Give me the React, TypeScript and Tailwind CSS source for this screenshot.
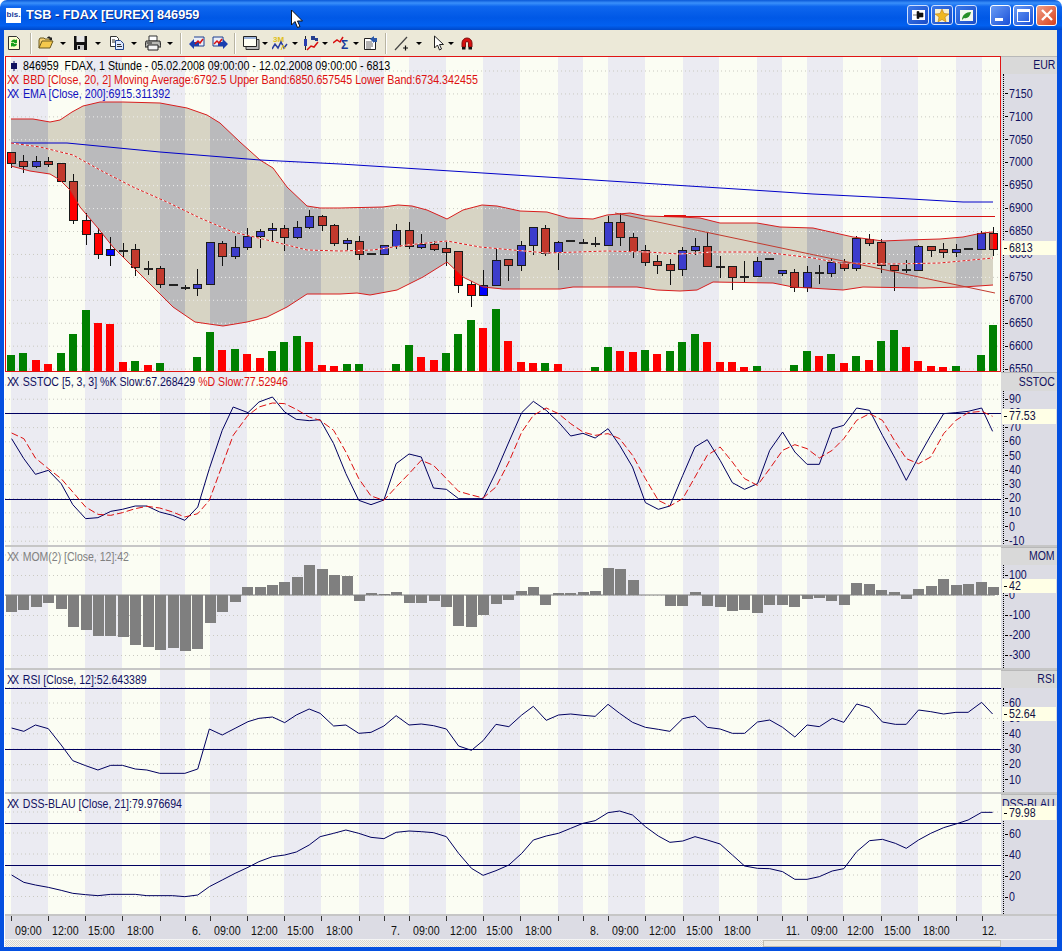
import type { ReactNode } from "react";

// stripe edges in page x, the stripes alternate cream / lavender
const edges = [5, 11, 48, 85, 122, 160, 185, 210, 247, 284, 321, 359, 384, 409, 446, 483, 520, 558, 583, 608, 645, 683, 719, 757, 782, 807, 843, 881, 918, 956, 982, 1001];
const stripes = edges.slice(0, -1).map((x, i) => ({ x, w: edges[i + 1] - x, lav: i % 2 === 1 }));
const barX = (i: number) => 11 + 12.43 * i;

type Candle = [number, number, number, number, "r" | "b" | "d"];
const candles: Candle[] = [
  [152, 152, 163, 168, "r"], [155, 161, 166, 173, "r"], [156, 161, 166, 168, "b"], [157, 161, 164, 167, "r"],
  [163, 163, 181, 181, "r"], [174, 181, 220, 224, "r"], [213, 220, 234, 245, "r"], [228, 233, 254, 259, "r"],
  [237, 249, 255, 266, "b"], [243, 250, 250, 258, "d"], [244, 249, 267, 276, "r"], [261, 268, 268, 275, "d"],
  [266, 268, 284, 288, "r"], [284, 284, 284, 284, "d"], [285, 287, 287, 290, "d"], [269, 284, 288, 296, "b"],
  [242, 242, 284, 285, "b"], [241, 243, 256, 266, "r"], [236, 247, 256, 259, "b"], [228, 236, 247, 250, "b"],
  [229, 231, 236, 248, "b"], [223, 228, 230, 241, "b"], [225, 228, 237, 251, "r"], [221, 227, 237, 239, "b"],
  [210, 216, 227, 229, "b"], [215, 216, 225, 231, "r"], [224, 225, 243, 246, "r"], [238, 240, 243, 250, "b"],
  [236, 241, 254, 260, "r"], [253, 253, 253, 253, "d"], [245, 245, 254, 254, "b"], [224, 230, 246, 249, "b"],
  [222, 230, 246, 249, "r"], [234, 244, 247, 249, "b"], [241, 244, 249, 251, "r"], [242, 248, 252, 266, "r"],
  [251, 251, 285, 293, "r"], [281, 284, 295, 307, "r"], [270, 285, 295, 295, "b"], [249, 260, 285, 285, "b"],
  [259, 259, 265, 281, "r"], [241, 245, 265, 271, "b"], [227, 227, 245, 255, "b"], [225, 228, 253, 256, "r"],
  [241, 242, 252, 270, "b"], [240, 240, 240, 240, "d"], [239, 242, 242, 244, "d"], [237, 243, 243, 247, "d"],
  [216, 222, 245, 245, "b"], [213, 222, 237, 246, "r"], [233, 237, 251, 258, "r"], [245, 250, 262, 266, "r"],
  [255, 261, 265, 274, "r"], [259, 264, 270, 285, "r"], [247, 250, 269, 276, "b"], [238, 246, 250, 255, "b"],
  [232, 246, 266, 266, "r"], [256, 266, 266, 278, "d"], [266, 266, 277, 290, "r"], [261, 276, 276, 282, "d"],
  [257, 261, 276, 277, "b"], [258, 258, 258, 258, "d"], [270, 270, 273, 276, "b"], [269, 272, 287, 292, "r"],
  [266, 272, 287, 292, "b"], [265, 272, 272, 284, "d"], [258, 262, 273, 277, "b"], [259, 262, 268, 271, "r"],
  [236, 238, 268, 271, "b"], [234, 239, 243, 246, "r"], [239, 242, 265, 273, "r"], [265, 265, 270, 291, "r"],
  [260, 269, 269, 273, "d"], [245, 246, 270, 271, "b"], [246, 246, 250, 257, "r"], [243, 249, 252, 258, "r"],
  [244, 249, 252, 257, "b"], [248, 248, 248, 248, "d"], [231, 233, 249, 250, "b"], [227, 233, 249, 256, "r"],
];

// volume bar tops, 0 = no bar. Colour per bar: g or r
const volumes: [number, "g" | "r"][] = [
  [355, "g"], [353, "g"], [360, "r"], [364, "r"], [353, "g"], [334, "g"], [310, "g"], [323, "r"], [324, "r"], [362, "r"],
  [361, "g"], [365, "r"], [363, "g"], [0, "g"], [0, "g"], [357, "g"], [332, "g"], [350, "r"], [349, "g"], [354, "r"],
  [358, "r"], [351, "g"], [342, "g"], [336, "g"], [342, "r"], [365, "r"], [366, "r"], [364, "g"], [364, "g"], [0, "g"],
  [0, "g"], [364, "g"], [345, "g"], [357, "r"], [360, "r"], [353, "g"], [334, "g"], [320, "g"], [328, "r"], [309, "g"],
  [341, "r"], [362, "r"], [363, "r"], [363, "g"], [364, "r"], [0, "g"], [0, "g"], [367, "g"], [347, "g"], [351, "r"],
  [352, "r"], [350, "g"], [354, "r"], [351, "g"], [342, "g"], [334, "g"], [342, "r"], [362, "r"], [362, "r"], [367, "r"],
  [366, "g"], [0, "g"], [0, "g"], [365, "g"], [351, "g"], [356, "r"], [354, "g"], [363, "r"], [356, "g"], [360, "r"],
  [341, "g"], [330, "g"], [347, "r"], [361, "r"], [366, "r"], [367, "r"], [366, "g"], [0, "g"], [355, "g"], [325, "g"],
];

// momentum bar ends, the baseline sits at y=595
const mom = [
  612, 610, 607, 603, 609, 627, 630, 636, 636, 637, 645, 647, 650, 648, 651, 649, 623, 612, 602, 587,
  587, 585, 582, 577, 565, 569, 575, 576, 601, 593, 594, 592, 603, 603, 601, 607, 626, 627, 615, 604,
  600, 591, 587, 605, 593, 593, 592, 591, 568, 569, 580, 595, 595, 606, 606, 592, 606, 607, 611, 610,
  613, 605, 605, 607, 599, 598, 601, 605, 583, 584, 590, 592, 599, 589, 586, 579, 585, 584, 582, 587,
];

const upper: number[][] = [[11, 119], [33, 119], [50, 122], [60, 120], [72, 112], [83, 106], [100, 102], [123, 102], [160, 103], [187, 108], [207, 115], [220, 123], [240, 142], [260, 160], [273, 168], [287, 187], [307, 206], [320, 208], [340, 208], [383, 207], [398, 205], [412, 206], [427, 210], [447, 219], [463, 210], [482, 205], [497, 206], [520, 211], [547, 212], [568, 218], [593, 219], [607, 215], [630, 213], [645, 216], [680, 217], [700, 218], [720, 223], [757, 223], [780, 227], [813, 228], [853, 237], [883, 241], [907, 240], [940, 239], [963, 237], [982, 233], [993, 232]];
const lower: number[][] = [[11, 166], [30, 171], [50, 174], [60, 180], [70, 190], [80, 207], [97, 227], [113, 247], [133, 267], [153, 287], [173, 307], [195, 322], [223, 326], [247, 322], [267, 317], [287, 307], [307, 294], [340, 294], [357, 293], [370, 295], [397, 290], [423, 277], [447, 262], [463, 277], [483, 287], [503, 289], [560, 289], [573, 287], [637, 287], [657, 290], [680, 291], [697, 290], [713, 282], [773, 283], [793, 287], [843, 290], [863, 287], [923, 288], [963, 287], [993, 285]];
const middle: number[][] = [[11, 143], [40, 147], [73, 155], [100, 170], [133, 187], [167, 202], [200, 218], [233, 232], [267, 240], [307, 250], [340, 251], [373, 250], [407, 245], [447, 241], [480, 247], [513, 250], [547, 253], [607, 251], [647, 252], [680, 254], [713, 252], [763, 252], [813, 258], [840, 263], [893, 264], [940, 263], [993, 258]];
const ema: number[][] = [[11, 143], [67, 143], [160, 152], [260, 160], [340, 164], [752, 190], [813, 194], [893, 198], [963, 202], [993, 202]];

// indicator lines were read off zoomed crops, so x comes in crop units
const fromCrop = (pts: number[][], top: number) => pts.map(([x, y]) => [x / 1.5525, top + y / 3]);
const pointsOf = (pts: number[][]) => pts.map((p) => p.join(",")).join(" ");

const stochK = fromCrop([[18, 200], [37, 260], [55, 307], [75, 295], [95, 335], [113, 398], [133, 440], [152, 437], [172, 418], [190, 412], [210, 402], [228, 402], [248, 420], [268, 430], [287, 445], [307, 405], [325, 290], [345, 175], [362, 105], [385, 122], [402, 90], [423, 75], [442, 120], [460, 142], [480, 146], [497, 143], [518, 215], [537, 305], [557, 385], [576, 398], [596, 384], [615, 275], [635, 246], [654, 255], [673, 348], [693, 352], [712, 380], [750, 380], [770, 300], [790, 210], [810, 122], [828, 88], [848, 115], [867, 150], [886, 192], [905, 184], [924, 198], [944, 170], [962, 220], [982, 285], [1002, 392], [1022, 412], [1040, 402], [1060, 310], [1079, 225], [1098, 203], [1118, 265], [1137, 332], [1156, 352], [1176, 335], [1195, 235], [1215, 180], [1234, 240], [1253, 277], [1272, 277], [1292, 170], [1310, 160], [1330, 108], [1350, 115], [1370, 190], [1390, 260], [1407, 325], [1426, 255], [1445, 190], [1465, 125], [1484, 122], [1503, 118], [1524, 108], [1541, 178]], 372);
const stochD = fromCrop([[18, 183], [37, 200], [55, 258], [75, 290], [95, 320], [113, 360], [133, 405], [152, 427], [172, 430], [190, 422], [210, 410], [228, 403], [248, 408], [268, 420], [287, 435], [307, 425], [325, 385], [345, 280], [362, 190], [385, 130], [402, 105], [423, 93], [442, 95], [460, 112], [480, 135], [497, 145], [518, 175], [537, 240], [557, 320], [576, 372], [596, 385], [615, 345], [635, 305], [654, 265], [673, 280], [693, 320], [712, 358], [730, 368], [750, 378], [770, 345], [790, 270], [810, 180], [828, 130], [848, 108], [867, 125], [886, 155], [905, 180], [924, 190], [944, 185], [962, 200], [982, 250], [1002, 320], [1022, 385], [1040, 402], [1060, 380], [1079, 315], [1098, 250], [1118, 225], [1137, 270], [1156, 320], [1176, 340], [1195, 290], [1215, 235], [1234, 218], [1253, 230], [1272, 258], [1292, 235], [1310, 200], [1330, 145], [1350, 125], [1370, 145], [1390, 210], [1407, 260], [1426, 275], [1445, 255], [1465, 185], [1484, 145], [1503, 122], [1524, 118], [1541, 133]], 372);
const rsi = fromCrop([[18, 174], [37, 184], [55, 165], [75, 176], [95, 225], [113, 272], [133, 287], [152, 300], [172, 286], [190, 286], [210, 297], [228, 300], [248, 310], [287, 310], [307, 297], [325, 177], [345, 195], [365, 175], [385, 155], [402, 145], [423, 141], [442, 158], [460, 135], [480, 117], [497, 130], [518, 168], [537, 165], [557, 190], [576, 187], [596, 168], [615, 137], [635, 165], [654, 162], [673, 167], [693, 177], [712, 228], [732, 241], [750, 212], [770, 163], [790, 170], [810, 135], [828, 109], [848, 151], [867, 135], [886, 132], [905, 136], [924, 139], [944, 103], [962, 130], [982, 157], [1002, 172], [1022, 178], [1040, 184], [1060, 146], [1079, 138], [1098, 172], [1118, 177], [1137, 190], [1156, 190], [1176, 156], [1195, 150], [1215, 172], [1234, 201], [1253, 165], [1272, 170], [1292, 145], [1310, 157], [1330, 102], [1350, 113], [1370, 156], [1390, 163], [1407, 163], [1426, 120], [1445, 125], [1465, 132], [1484, 127], [1503, 127], [1524, 97], [1541, 132]], 670);
const dss = fromCrop([[18, 615], [37, 637], [55, 645], [75, 652], [95, 661], [113, 670], [133, 674], [152, 677], [172, 673], [210, 673], [228, 677], [268, 677], [287, 680], [307, 675], [325, 650], [345, 630], [365, 610], [385, 592], [402, 575], [423, 560], [442, 555], [460, 546], [480, 525], [497, 500], [518, 490], [537, 480], [557, 490], [576, 502], [596, 506], [615, 487], [635, 483], [654, 485], [673, 488], [693, 500], [712, 550], [732, 595], [750, 616], [770, 602], [790, 585], [810, 550], [828, 510], [848, 498], [867, 490], [886, 475], [905, 460], [924, 452], [944, 428], [962, 423], [982, 435], [1002, 470], [1022, 498], [1040, 517], [1060, 513], [1079, 500], [1098, 510], [1118, 522], [1137, 555], [1156, 588], [1176, 595], [1195, 596], [1215, 605], [1234, 628], [1253, 628], [1272, 620], [1292, 603], [1310, 596], [1330, 545], [1350, 512], [1370, 508], [1390, 520], [1407, 535], [1426, 510], [1445, 490], [1465, 473], [1484, 462], [1503, 450], [1524, 427], [1541, 427]], 670);

const timeSegments: { x: number; w: number; label?: string; pad: string }[] = [
  ["09:00", 4], ["12:00", 4], ["15:00", 3], ["18:00", 5], ["", 0], ["6.", 7], ["09:00", 4], ["12:00", 4], ["15:00", 3], ["18:00", 5], ["", 0],
  ["7.", 7], ["09:00", 4], ["12:00", 4], ["15:00", 3], ["18:00", 5], ["", 0], ["8.", 7], ["09:00", 4], ["12:00", 4], ["15:00", 3], ["18:00", 5], ["", 0],
  ["11.", 4], ["09:00", 4], ["12:00", 4], ["15:00", 3], ["18:00", 5], ["", 0], ["12.", 0],
].map((s, i) => ({
  x: edges[i + 1],
  w: edges[i + 2] - edges[i + 1],
  label: s[0] as string,
  pad: `${s[1]}px`,
}));

function Grid({ ys }: { ys: number[] }) {
  return (
    <>
      {ys.map((y) => (
        <line key={y} x1={5} x2={1001} y1={y} y2={y} stroke="#c9c9c0" strokeDasharray="1 3" />
      ))}
    </>
  );
}

function Level({ y }: { y: number }) {
  return <line x1={5} x2={1001} y1={y} y2={y} stroke="#000060" strokeWidth={1} shapeRendering="crispEdges" />;
}

function CandleSet({ red, blue }: { red: string; blue: string }) {
  return (
    <g shapeRendering="crispEdges">
      {candles.map(([wt, bt, bb, wb, kind], i) => {
        const x = Math.round(barX(i));
        return (
          <g key={i}>
            <line x1={x + 0.5} x2={x + 0.5} y1={wt} y2={wb} stroke="#111" />
            {kind === "d" ? (
              <rect x={x - 4} y={bt} width={9} height={1.5} fill="#222" />
            ) : (
              <rect x={x - 4 + 0.5} y={bt + 0.5} width={8} height={Math.max(bb - bt, 2)} fill={kind === "r" ? red : blue} stroke="#1a1a1a" />
            )}
          </g>
        );
      })}
    </g>
  );
}

function PriceChart() {
  const grid = Array.from({ length: 14 }, (_, n) => 71 + 22.93 * n);
  const bandShape = pointsOf([...upper, ...[...lower].reverse()]);
  return (
    <svg className="absolute inset-0" width={996} height={316} viewBox="5 56 996 316">
      <defs>
        <clipPath id="band">
          <polygon points={bandShape} />
        </clipPath>
      </defs>
      <Grid ys={grid} />
      <g clipPath="url(#band)">
        {stripes.map((s) => (
          <rect key={s.x} x={s.x} y={56} width={s.w} height={316} fill={s.lav ? "#bababc" : "#d7d4c4"} />
        ))}
        {grid.map((y) => (
          <line key={y} x1={5} x2={1001} y1={y} y2={y} stroke="#eeeeee" strokeDasharray="1 3" />
        ))}
      </g>
      {volumes.map(([top, colour], i) =>
        top ? (
          <rect key={i} x={Math.round(barX(i)) - 4} y={top} width={8} height={372 - top} fill={colour === "g" ? "#008000" : "#ff0000"} shapeRendering="crispEdges" />
        ) : null
      )}
      <CandleSet red="#ff0000" blue="#0000ff" />
      <g clipPath="url(#band)">
        <CandleSet red="#c23a2e" blue="#3c3ccc" />
      </g>
      <polyline points={pointsOf(upper)} fill="none" stroke="#d81e1e" />
      <polyline points={pointsOf(lower)} fill="none" stroke="#d81e1e" />
      <polyline points={pointsOf(ema)} fill="none" stroke="#0000c8" />
      <polyline points={pointsOf(middle)} fill="none" stroke="#ffffff" />
      <polyline points={pointsOf(middle)} fill="none" stroke="#dd1818" strokeDasharray="3 2" />
      <line x1={664} x2={995} y1={216.5} y2={216.5} stroke="#d81010" />
      <line x1={664} x2={686} y1={216} y2={216} stroke="#e01010" strokeWidth={2} />
      <line x1={615} y1={213} x2={995} y2={293} stroke="#c23a2e" />
    </svg>
  );
}

function StochChart() {
  return (
    <svg className="absolute inset-0" width={996} height={173} viewBox="5 372 996 173">
      <Grid ys={Array.from({ length: 12 }, (_, n) => 385 + 14.2 * n)} />
      <Level y={413.5} />
      <Level y={499.5} />
      <polyline points={pointsOf(stochK)} fill="none" stroke="#000060" />
      <polyline points={pointsOf(stochD)} fill="none" stroke="#dd1010" strokeDasharray="7 3" />
    </svg>
  );
}

function MomChart() {
  return (
    <svg className="absolute inset-0" width={996} height={121} viewBox="5 547 996 121">
      <Grid ys={[555, 575.5, 595.5, 615.5, 635.5, 655.5]} />
      <line x1={5} x2={995} y1={595} y2={595} stroke="#808080" />
      <g shapeRendering="crispEdges" fill="#7f7f7f">
        {mom.map((end, i) => (
          <rect key={i} x={Math.round(barX(i)) - 5} y={Math.min(end, 595)} width={11} height={Math.abs(end - 595)} />
        ))}
      </g>
    </svg>
  );
}

function RsiChart() {
  return (
    <svg className="absolute inset-0" width={996} height={122} viewBox="5 670 996 122">
      <Grid ys={Array.from({ length: 7 }, (_, n) => 687.6 + 15.4 * n)} />
      <Level y={688.5} />
      <Level y={749.5} />
      <polyline points={pointsOf(rsi)} fill="none" stroke="#000060" />
    </svg>
  );
}

function DssChart() {
  return (
    <svg className="absolute inset-0" width={996} height={120} viewBox="5 794 996 120">
      <Grid ys={[812, 833, 854, 875, 896.5]} />
      <Level y={823.5} />
      <Level y={865.5} />
      <polyline points={pointsOf(dss)} fill="none" stroke="#000060" />
    </svg>
  );
}

function Stripes() {
  return (
    <div className="flex h-full w-full">
      {stripes.map((s) => (
        <div key={s.x} className={s.lav ? "h-full bg-[#ebebf2]" : "h-full bg-[#fbfdf3]"} style={{ width: s.w }} />
      ))}
    </div>
  );
}

function Legend({ children, className }: { children: ReactNode; className: string }) {
  return (
    <div className={`h-[14px] whitespace-nowrap origin-left ${className}`}>
      <span className="mr-[7px] tracking-[-2.5px]">XX</span>
      {children}
    </div>
  );
}

function AxisRow({ value, rowClass }: { value: string; rowClass: string }) {
  return (
    <div className={`flex items-center ${rowClass}`}>
      <span className="ml-px mr-px h-px w-[3px] bg-black" />
      <span className="scale-x-[0.85] origin-left">{value}</span>
    </div>
  );
}

function Axis({
  name,
  headClass,
  padClass,
  rowClass,
  values,
  tag,
  tagClass,
}: {
  name: string;
  headClass: string;
  padClass: string;
  rowClass: string;
  values: string[];
  tag?: string;
  tagClass?: string;
}) {
  return (
    <div className="relative flex h-full w-[56px] flex-col overflow-hidden bg-[#dcdce4] text-[12.5px] leading-none text-[#101060]">
      <div className={`flex shrink-0 justify-end border-t border-[#b8b8b8] bg-[#d9d9d9] pr-[2px] ${headClass}`}>
        <span className="scale-x-[0.84] origin-right whitespace-nowrap">{name}</span>
      </div>
      <div className={`ml-[2px] flex-1 border-l border-dotted border-black ${padClass}`}>
        {values.map((v) => (
          <AxisRow key={v} value={v} rowClass={rowClass} />
        ))}
      </div>
      {tag && (
        <div className={`absolute left-px right-px flex items-center bg-[#ffffe6] ${tagClass}`}>
          <span className="ml-[2px] mr-[2px] h-px w-[3px] bg-black" />
          <span className="scale-x-[0.85] origin-left text-[#101040]">{tag}</span>
        </div>
      )}
    </div>
  );
}

function Pane({
  sizeClass,
  legend,
  chart,
  axis,
  selected,
}: {
  sizeClass: string;
  legend: ReactNode;
  chart: ReactNode;
  axis: ReactNode;
  selected?: boolean;
}) {
  return (
    <div className={`flex shrink-0 ${sizeClass} ${selected ? "" : "border-b-2 border-[#c6c6c6]"}`}>
      <div className="relative h-full w-[996px] overflow-hidden">
        <Stripes />
        {chart}
        <div className="absolute left-[2px] top-[3px] text-[12.5px] leading-[14px]">{legend}</div>
        {selected && <div className="absolute inset-0 border border-[#e01414]" />}
      </div>
      {axis}
    </div>
  );
}

function DropArrow({ className }: { className: string }) {
  return <div className={`h-0 w-0 border-x-[3px] border-t-[3px] border-x-transparent border-t-black ${className}`} />;
}

function Sep({ className }: { className: string }) {
  return <div className={`h-[21px] w-[2px] border-l border-r border-l-[#b8b4a2] border-r-white ${className}`} />;
}

function Icon({ className, children, w = 16 }: { className: string; children: ReactNode; w?: number }) {
  return (
    <svg className={`shrink-0 ${className}`} width={w} height={16} viewBox={`0 0 ${w} 16`}>
      {children}
    </svg>
  );
}

function Toolbar() {
  return (
    <div className="flex h-[26px] shrink-0 items-center bg-[#ece9d8]">
      <Icon className="ml-[3px]" w={14}>
        <path d="M1.500 1.500h8l3 3v10h-11z" fill="#ffffd0" stroke="#333" />
        <path d="M4 7a3.200 3.200 0 0 1 5-2l1-1v4H6.500l1-1a2 2 0 0 0-2 .5z" fill="#18a018" />
        <path d="M10 9a3.200 3.200 0 0 1-5 2l-1 1V8h3.500l-1 1a2 2 0 0 0 2-.5z" fill="#18a018" />
      </Icon>
      <Sep className="ml-[9px]" />
      <Icon className="ml-[6px]">
        <path d="M1 13V5l1-2h4l1 1h6v2" fill="#f7d070" stroke="#6b5a20" />
        <path d="M1 13l3-7h11l-3 7z" fill="#f4c84c" stroke="#6b5a20" />
        <path d="M9 3c1-2 3-2 4 0l1-1v3h-3l1-1c-1-1-2-1-3-1z" fill="#222" />
      </Icon>
      <DropArrow className="ml-[6px]" />
      <Icon className="ml-[7px]" w={15}>
        <path d="M1 1h13v14H1z" fill="#111" />
        <path d="M3.500 1h8v6h-8z" fill="#e8e8e8" />
        <path d="M4 10h7v5H4z" fill="#c8c8c8" />
        <path d="M5 11h2v3H5z" fill="#111" />
      </Icon>
      <DropArrow className="ml-[7px]" />
      <Icon className="ml-[8px]" w={15}>
        <path d="M1.500 1.500h6l2 2v8h-8z" fill="#fff" stroke="#333" />
        <path d="M6.500 5.500h5l3 3v6h-8z" fill="#dde8ff" stroke="#224488" />
        <path d="M3 5h3M3 7h3M8 9.500h4M8 11.500h5" stroke="#333" />
      </Icon>
      <DropArrow className="ml-[7px]" />
      <Icon className="ml-[8px]">
        <path d="M4 1h8v5H4z" fill="#fff" stroke="#333" />
        <path d="M1 6h14l1 6H0z" fill="#b8b8b4" stroke="#222" />
        <path d="M3 10h10v5H3z" fill="#f4f4f4" stroke="#222" />
        <path d="M2 8h5" stroke="#222" />
      </Icon>
      <DropArrow className="ml-[6px]" />
      <Sep className="ml-[7px]" />
      <Icon className="ml-[7px]">
        <path d="M5 2h10v9H5" fill="#e8eef8" stroke="#1f3f8f" />
        <path d="M0 9l5-5v3h5v4H5v3z" fill="#1a3fb0" />
        <path d="M6 9l3-3 2 2 3-4" fill="none" stroke="#d81010" strokeWidth={1.5} />
      </Icon>
      <Icon className="ml-[7px]">
        <path d="M1 2h10v9H1z" fill="#e8eef8" stroke="#1f3f8f" />
        <path d="M16 9l-5-5v3H6v4h5v3z" fill="#1a3fb0" />
        <path d="M2 9l3-3 2 2 3-4" fill="none" stroke="#d81010" strokeWidth={1.5} />
      </Icon>
      <Sep className="ml-[6px]" />
      <Icon className="ml-[6px]" w={18}>
        <path d="M4 4.500h13v10H4z" fill="#bbb" stroke="#333" />
        <path d="M1.500 1.500h13v10h-13z" fill="#fffff4" stroke="#222" />
        <path d="M2 2h12v2H2z" fill="#9cb4dc" />
      </Icon>
      <DropArrow className="ml-[2px]" />
      <Icon className="ml-[4px]">
        <text x={1} y={7} fontSize={8} fontWeight={700} fill="#e0c020" fontFamily="Liberation Sans, sans-serif">3M</text>
        <path d="M0 14l3-5 3 4 3-6 3 6 3-4" fill="none" stroke="#2a3fa0" strokeWidth={1.5} />
        <path d="M9 15l2-5 2 4" fill="none" stroke="#e0c020" />
      </Icon>
      <DropArrow className="ml-[4px]" />
      <Icon className="ml-[5px]">
        <path d="M2.500 1v14" stroke="#222" />
        <path d="M1 4h3v7H1z" fill="#2a3fb0" />
        <path d="M8 1h4v4H8zM12 3h3v3h-3z" fill="#27408f" />
        <path d="M4 15l4-4 3 1 4-5" fill="none" stroke="#d81010" strokeWidth={1.5} />
      </Icon>
      <DropArrow className="ml-[3px]" />
      <Icon className="ml-[5px]" w={18}>
        <path d="M0 8l4-3 3 2 3-5" fill="none" stroke="#d81010" strokeWidth={1.5} />
        <text x={8} y={14} fontSize={12} fontWeight={700} fill="#1a3a9a" fontFamily="Liberation Sans, sans-serif">Σ</text>
      </Icon>
      <DropArrow className="ml-[2px]" />
      <Icon className="ml-[3px]">
        <path d="M2.500 3.500h8l3 3v8h-11z" fill="#fff" stroke="#222" />
        <path d="M4 7h6M4 9h7M4 11h7M4 13h5" stroke="#666" />
        <path d="M8 4l4-3v2h3v4h-3v1z" fill="#2a58a8" />
      </Icon>
      <Sep className="ml-[7px]" />
      <Icon className="ml-[7px]">
        <path d="M1 15L13 2" stroke="#444" strokeWidth={1.2} />
        <path d="M9 13h5M11.500 10.500v5" stroke="#111" strokeWidth={1.2} />
      </Icon>
      <DropArrow className="ml-[6px]" />
      <Icon className="ml-[11px]" w={11}>
        <path d="M1.500 1v12l3-3 2 5 2-1-2-4.500h4z" fill="#fff" stroke="#222" />
      </Icon>
      <DropArrow className="ml-[4px]" />
      <Icon className="ml-[5px]">
        <path d="M3 12V8a5 5 0 0 1 10 0v4h-3.500V8a1.500 1.500 0 0 0-3 0v4z" fill="#d81010" stroke="#801010" />
        <path d="M3 12h3.500v2.500H3zM9.500 12H13v2.500H9.500z" fill="#111" />
      </Icon>
    </div>
  );
}

function CaptionExtra({ children }: { children: ReactNode }) {
  return (
    <div className="flex h-[20px] w-[22px] items-center justify-center rounded-[3px] border border-[#cfe0ff] bg-[linear-gradient(135deg,#3a78e8,#1a4cc8)]">
      {children}
    </div>
  );
}

function TitleBar() {
  return (
    <div className="flex h-[30px] shrink-0 items-center rounded-t-[7px] bg-[linear-gradient(to_bottom,#0a58d8_0%,#3a90fa_10%,#0e66ee_22%,#0058e6_60%,#0260f0_85%,#0048c8_100%)] pl-[6px] pr-[5px]">
      <div className="flex h-[15px] w-[15px] items-center justify-center bg-white text-[8px] font-bold leading-none text-[#183a9a]">bis.</div>
      <span className="ml-[5px] scale-x-[0.98] origin-left whitespace-nowrap text-[13px] font-bold text-white [text-shadow:1px_1px_0_#0a2a88]">
        TSB - FDAX [EUREX] 846959
      </span>
      <div className="ml-auto flex items-center gap-[2px]">
        <CaptionExtra>
          <svg width={13} height={10} viewBox="0 0 13 10">
            <path d="M0 0h13v10H0z" fill="#fff" />
            <path d="M1 5h4M5 1.500h2v7H5zM7 3h4v4H7z" fill="#111" stroke="#111" strokeWidth={0.6} />
          </svg>
        </CaptionExtra>
        <CaptionExtra>
          <svg width={14} height={13} viewBox="0 0 14 13">
            <path d="M0 0h14v13H0z" fill="#f8f0d0" />
            <path d="M7 0l2 4.500 5 .5-4 3 1 5-4-2.500L3 13l1-5-4-3 5-.5z" fill="#f0b820" stroke="#b07010" strokeWidth={0.5} />
          </svg>
        </CaptionExtra>
        <CaptionExtra>
          <svg width={13} height={11} viewBox="0 0 13 11">
            <path d="M0 0h13v11H0z" fill="#f4f8f0" />
            <path d="M2 10c0-5 4-8 9-8-1 5-4 7-7 6z" fill="#289028" />
          </svg>
        </CaptionExtra>
        <div className="ml-[11px] flex h-[21px] w-[21px] items-end rounded-[3px] border border-white bg-[linear-gradient(135deg,#6a9cf4,#1a50d8)] px-[4px] pb-[4px]">
          <div className="h-[3px] w-[8px] bg-white" />
        </div>
        <div className="flex h-[21px] w-[21px] items-center justify-center rounded-[3px] border border-white bg-[linear-gradient(135deg,#6a9cf4,#1a50d8)]">
          <div className="h-[13px] w-[13px] border border-t-[3px] border-white" />
        </div>
        <div className="flex h-[21px] w-[21px] items-center justify-center rounded-[3px] border border-white bg-[linear-gradient(135deg,#f0a088,#d8401c)]">
          <svg width={12} height={12} viewBox="0 0 12 12">
            <path d="M1 1l10 10M11 1L1 11" stroke="#fff" strokeWidth={2.4} />
          </svg>
        </div>
      </div>
    </div>
  );
}

function TimeAxis() {
  return (
    <div className="flex h-[24px] shrink-0 border-b border-[#f4f4f4]">
      <div className="flex h-full w-[996px] bg-[#dcdce4] text-[12.5px] leading-none text-[#101010]">
        <div className="w-[6px] shrink-0" />
        {timeSegments.map((s) => (
          <div key={s.x} className="flex h-full shrink-0 flex-col" style={{ width: s.w }}>
            <div className="h-[5px] w-px bg-[#333]" />
            <span className="mt-[4px] scale-x-[0.85] origin-left whitespace-nowrap" style={{ marginLeft: s.pad }}>
              {s.label}
            </span>
          </div>
        ))}
      </div>
      <div className="h-full w-[56px] bg-[#dcdce4]" />
    </div>
  );
}

function ScrollRow() {
  return (
    <div className="flex h-[7px] shrink-0">
      <div className="flex w-[996px]">
        <div className="flex-1 bg-[repeating-conic-gradient(#d8d6ce_0%_25%,#f6f6f2_0%_50%)] bg-[length:2px_2px]" />
        <div className="w-[238px] border border-[#c0bdb0] bg-[#eceae0]" />
      </div>
      <div className="w-[56px] bg-[#dcdce4]" />
    </div>
  );
}

export default function App() {
  const priceValues = ["7150", "7100", "7050", "7000", "6950", "6900", "6850", "6800", "6750", "6700", "6650", "6600", "6550"];
  return (
    <div className="relative h-[951px] w-[1062px] overflow-hidden bg-white font-['Liberation_Sans',sans-serif]">
      <TitleBar />
      <div className="flex h-[921px] flex-col border-x-[4px] border-b-[4px] border-[#0450e0] border-r-[5px]">
        <Toolbar />
        <div className="flex flex-1 flex-col pl-px">
          <Pane
            selected
            sizeClass="h-[316px]"
            chart={<PriceChart />}
            legend={
              <>
                <div className="flex h-[14px] items-center whitespace-nowrap">
                  <svg className="ml-[4px] mr-[6px] shrink-0" width={6} height={10} viewBox="0 0 6 10">
                    <path d="M3 0v10" stroke="#101060" />
                    <path d="M0 2h6v6H0z" fill="#101060" />
                  </svg>
                  <span className="scale-x-[0.855] origin-left">846959&nbsp; FDAX, 1 Stunde - 05.02.2008 09:00:00 - 12.02.2008 09:00:00 - 6813</span>
                </div>
                <Legend className="scale-x-[0.857] text-[#dd1010]">BBD [Close, 20, 2] Moving Average:6792.5 Upper Band:6850.657545 Lower Band:6734.342455</Legend>
                <Legend className="scale-x-[0.855] text-[#1010c0]">EMA [Close, 200]:6915.311392</Legend>
              </>
            }
            axis={
              <Axis name="EUR" headClass="h-[18px] items-center" padClass="pt-[8.5px]" rowClass="h-[22.93px]" values={priceValues} tag="6813" tagClass="top-[185px] h-[14px]" />
            }
          />
          <Pane
            sizeClass="h-[175px]"
            chart={<StochChart />}
            legend={
              <Legend className="scale-x-[0.845] text-[#101060]">
                SSTOC [5, 3, 3] %K Slow:67.268429 <span className="text-[#dd1010]">%D Slow:77.52946</span>
              </Legend>
            }
            axis={
              <Axis name="SSTOC" headClass="h-[19px] items-center" padClass="pt-[1px]" rowClass="h-[14.2px]" values={["90", "80", "70", "60", "50", "40", "30", "20", "10", "0", "-10"]} tag="77.53" tagClass="top-[37px] h-[15px]" />
            }
          />
          <Pane
            sizeClass="h-[123px]"
            chart={<MomChart />}
            legend={<Legend className="scale-x-[0.84] text-[#808080]">MOM(2) [Close, 12]:42</Legend>}
            axis={
              <Axis name="MOM" headClass="h-[18px] items-center" padClass="pt-[0.5px]" rowClass="h-[20px]" values={["100", "0", "-100", "-200", "-300"]} tag="42" tagClass="top-[32px] h-[14px]" />
            }
          />
          <Pane
            sizeClass="h-[124px]"
            chart={<RsiChart />}
            legend={<Legend className="scale-x-[0.845] text-[#101060]">RSI [Close, 12]:52.643389</Legend>}
            axis={
              <Axis name="RSI" headClass="h-[18px] items-center" padClass="pt-[7.3px]" rowClass="h-[15.4px]" values={["60", "50", "40", "30", "20", "10"]} tag="52.64" tagClass="top-[37px] h-[14px]" />
            }
          />
          <Pane
            sizeClass="h-[122px]"
            chart={<DssChart />}
            legend={<Legend className="scale-x-[0.845] text-[#101060]">DSS-BLAU [Close, 21]:79.976694</Legend>}
            axis={
              <Axis name="DSS-BLAU" headClass="h-[12px] items-start pt-[3px]" padClass="pt-[17.5px]" rowClass="h-[21px]" values={["60", "40", "20", "0"]} tag="79.98" tagClass="top-[12px] h-[14px]" />
            }
          />
          <TimeAxis />
          <ScrollRow />
        </div>
      </div>
      {/* mouse pointer left on the title bar */}
      <svg className="absolute left-[290px] top-[9px]" width={14} height={20} viewBox="0 0 14 20">
        <path d="M1.500 1v15l3.500-3.500 2.500 6 2.500-1-2.500-5.500h5z" fill="#fff" stroke="#111" />
      </svg>
    </div>
  );
}
